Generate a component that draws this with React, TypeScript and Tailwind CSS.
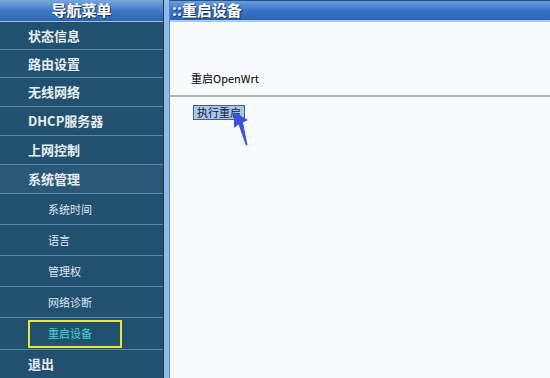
import React from "react";

const cjk = { fontFamily: '"Noto Sans CJK SC", "Noto Sans", sans-serif' };

const top1 = [
  { t: "状态信息", h: "h-[28px]" },
  { t: "路由设置", h: "h-[28px]" },
  { t: "无线网络", h: "h-[29px]" },
  { t: "DHCP服务器", h: "h-[29px]" },
  { t: "上网控制", h: "h-[29px]" },
];
const subs = ["系统时间", "语言", "管理权", "网络诊断"];

export default function App() {
  return (
    <div className="flex h-[378px] w-[550px] overflow-hidden bg-[#f7fbfe]" style={cjk}>
      {/* Sidebar */}
      <div className="flex w-[163px] flex-col bg-[#22506f]">
        <div className="flex h-[22px] items-center justify-center border-b border-[#9cc0e6] bg-gradient-to-b from-[#7aa8de] via-[#3f78c4] to-[#2e66b2] text-[15px] font-bold text-white [text-shadow:1px_1px_1px_#1a3560]">
          导航菜单
        </div>
        {top1.map((r) => (
          <div
            key={r.t}
            className={`flex ${r.h} items-center border-b border-[#5b87a8] pl-[28px] text-[13px] font-bold text-[#e6edf3]`}
          >
            {r.t}
          </div>
        ))}
        <div className="flex h-[29px] items-center border-b border-[#5b87a8] bg-[#2b5877] pl-[28px] text-[13px] font-bold text-[#e6edf3]">
          系统管理
        </div>
        {subs.map((t) => (
          <div
            key={t}
            className="flex h-[31px] items-center border-b border-[#5b87a8] pl-[48px] text-[11px] text-[#dfe8ef]"
          >
            {t}
          </div>
        ))}
        <div className="flex h-[32px] items-center border-b border-[#5b87a8]">
          <div className="ml-[28px] flex h-[28px] w-[94px] items-center border-2 border-[#e8e830] pl-[18px] text-[11px] text-[#3fd8d0]">
            重启设备
          </div>
        </div>
        <div className="flex flex-1 items-center pl-[28px] text-[13px] font-bold text-[#e6edf3]">
          退出
        </div>
      </div>
      {/* Divider strips */}
      <div className="w-[1px] bg-[#183a55]" />
      <div className="w-[5px] bg-[#8fbbe9]" />
      <div className="w-[1px] bg-[#5a86c0]" />
      {/* Content */}
      <div className="relative flex flex-1 flex-col">
        <div className="flex h-[22px] items-center border-t border-[#2a4f80] border-b-2 border-b-[#a8c8ee] bg-gradient-to-b from-[#6a9ee0] via-[#3a72c8] to-[#2c62b8] pl-[2px] text-[15px] font-bold text-white [text-shadow:1px_1px_1px_#1a3560]">
          ::重启设备
        </div>
        <div className="h-[48px]" />
        <div className="pl-[21px] text-[11px] text-black">重启OpenWrt</div>
        <div className="mt-[8px] h-[2px] bg-[#b4b4b4]" />
        <div className="pl-[23px] pt-[1px]">
          <button className="h-[15px] border border-[#506070] bg-[#a9c6ef] px-[3px] text-[11px] leading-[13px] text-[#102030]" style={cjk}>
            执行重启
          </button>
        </div>
        <svg
          className="absolute left-[57px] top-[108px]"
          width="30"
          height="40"
          viewBox="0 0 30 40"
        >
          <path
            d="M7 4 L21 12 L16 14.5 L20.5 37 L19 37.5 L11.5 16.5 L7 20 Z"
            fill="#3b55d6"
          />
        </svg>
      </div>
    </div>
  );
}
